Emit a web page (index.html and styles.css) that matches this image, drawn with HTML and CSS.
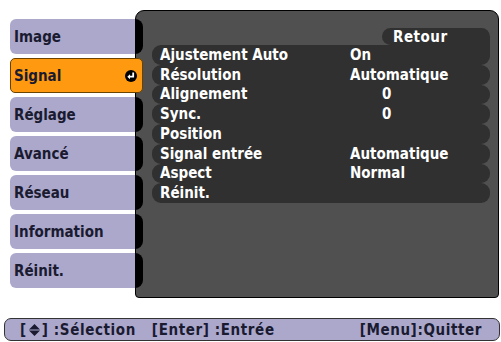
FILE: index.html
```html
<!DOCTYPE html>
<html lang="fr">
<head>
    <meta charset="UTF-8">
    <title>Signal</title>
    <link rel="stylesheet" href="styles.css">
</head>
<body>
    <div class="screen">
        <div class="main">
            <ul class="tabs">
                <li class="tab">Image</li>
                <li class="tab active">Signal
                    <svg class="enter" width="12" height="12" viewBox="0 0 12 12">
                        <circle cx="6" cy="6" r="6" fill="#000"/>
                        <path d="M8.2 2.6 V6.7 H4" fill="none" stroke="#fff" stroke-width="1.8"/>
                        <path d="M2.3 6.7 L5 4.2 V9.2 Z" fill="#fff"/>
                    </svg>
                </li>
                <li class="tab">Réglage</li>
                <li class="tab">Avancé</li>
                <li class="tab">Réseau</li>
                <li class="tab">Information</li>
                <li class="tab">Réinit.</li>
            </ul>

            <div class="panel">
                <div class="panel-head">
                    <span class="back">Retour</span>
                </div>
                <ul class="rows">
                    <li class="row"><span>Ajustement Auto</span><span>On</span></li>
                    <li class="row"><span>Résolution</span><span>Automatique</span></li>
                    <li class="row"><span>Alignement</span><span class="num">0</span></li>
                    <li class="row"><span>Sync.</span><span class="num">0</span></li>
                    <li class="row"><span>Position</span><span></span></li>
                    <li class="row"><span>Signal entrée</span><span>Automatique</span></li>
                    <li class="row"><span>Aspect</span><span>Normal</span></li>
                    <li class="row"><span>Réinit.</span><span></span></li>
                </ul>
            </div>
        </div>

        <div class="help">
            <span>[<svg class="updown" width="11" height="12" viewBox="0 0 11 12"><path d="M5.5 0 L11 5.5 H0 Z M0 6.5 H11 L5.5 12 Z" fill="#1a1a30"/></svg>] :Sélection</span>
            <span class="gap">[Enter] :Entrée</span>
            <span class="quit">[Menu]:Quitter</span>
        </div>
    </div>
</body>
</html>
```

FILE: styles.css
```css
body {
    margin: 0;
    background-color: #fff;
    font-family: "DejaVu Sans Condensed", "DejaVu Sans", sans-serif;
    font-stretch: condensed;
    font-weight: bold;
    font-size: 15px;
}

.screen {
    width: 501px;
    height: 342px;
    display: flex;
    flex-direction: column;
}

.main {
    display: flex;
    padding-top: 10px;
}

.tabs {
    list-style: none;
    margin: 0;
    padding: 9px 0 0 10px;
    width: 133px;
    flex: none;
    display: flex;
    flex-direction: column;
    gap: 4px;
    z-index: 1;
}

.tab {
    height: 35px;
    box-sizing: border-box;
    display: flex;
    align-items: center;
    justify-content: space-between;
    padding: 0 5px 0 4px;
    color: #1a1a30;
    background: linear-gradient(90deg, #aba8cc 125px, #000 125px);
    border-radius: 6px 8px 8px 6px;
}

.tab.active {
    background: #ff9a10;
    border: 1px solid #6b4300;
    border-radius: 5px;
    padding-left: 3px;
}

.enter {
    display: block;
}

.panel {
    margin-left: -8px;
    width: 364px;
    height: 288px;
    box-sizing: border-box;
    background-color: #505050;
    border: 1px solid #000;
    border-radius: 9px 9px 4px 4px;
    padding: 17px 8px 0 16px;
    display: flex;
    flex-direction: column;
    color: #fff;
}

.panel-head {
    display: flex;
    justify-content: flex-end;
}

.back {
    width: 108px;
    height: 17px;
    box-sizing: border-box;
    padding-left: 11px;
    line-height: 18px;
    letter-spacing: 0.5px;
    background-color: #303030;
    border-radius: 9px 9px 0 9px;
}

.rows {
    list-style: none;
    margin: 0;
    padding: 0;
    height: 158px;
    display: flex;
    flex-direction: column;
}

.row {
    flex: 1;
    display: grid;
    grid-template-columns: 190px 1fr;
    align-items: center;
    padding-left: 8px;
    background-color: #303030;
    border-radius: 9px;
}

.row:first-child {
    border-top-right-radius: 0;
}

.num {
    padding-left: 32px;
}

.help {
    margin: 20px 1px 0 4px;
    height: 23px;
    box-sizing: border-box;
    display: flex;
    align-items: center;
    padding: 0 17px 0 15px;
    background-color: #aba8cc;
    border: 1px solid #333;
    border-radius: 7px;
    color: #1a1a30;
    font-size: 15px;
    letter-spacing: 0.6px;
}

.updown {
    margin: 0 2px;
    vertical-align: -1px;
}

.gap {
    margin-left: 16px;
}

.quit {
    margin-left: auto;
}
```
